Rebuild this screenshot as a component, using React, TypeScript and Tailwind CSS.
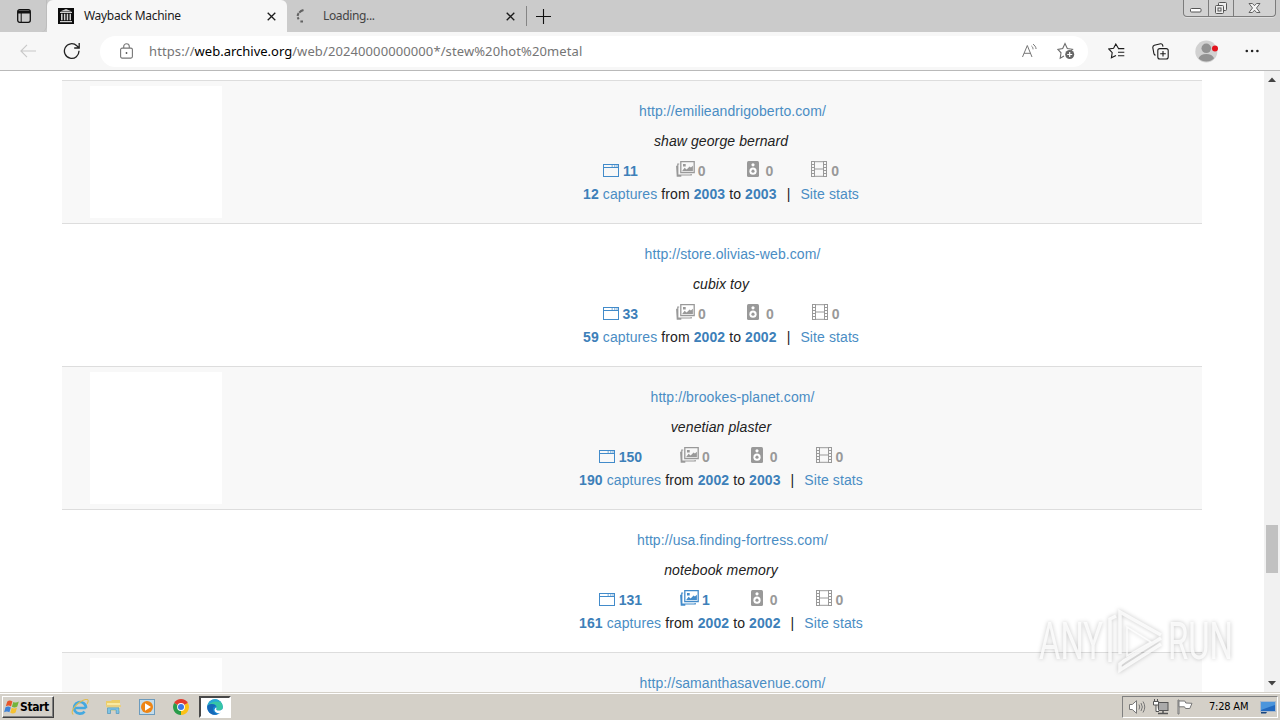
import React from "react";
import { clsx } from "clsx";

type Capture = {
  url: string;
  title: string;
  pages: string;
  images: string;
  audio: string;
  video: string;
  captures: string;
  from: string;
  to: string;
};

const results: Capture[] = [
  { url: "http://emilieandrigoberto.com/", title: "shaw george bernard", pages: "11", images: "0", audio: "0", video: "0", captures: "12", from: "2003", to: "2003" },
  { url: "http://store.olivias-web.com/", title: "cubix toy", pages: "33", images: "0", audio: "0", video: "0", captures: "59", from: "2002", to: "2002" },
  { url: "http://brookes-planet.com/", title: "venetian plaster", pages: "150", images: "0", audio: "0", video: "0", captures: "190", from: "2002", to: "2003" },
  { url: "http://usa.finding-fortress.com/", title: "notebook memory", pages: "131", images: "1", audio: "0", video: "0", captures: "161", from: "2002", to: "2002" },
];

const TabCloseIcon = () => (
  <svg width="9" height="9" viewBox="0 0 9 9" stroke="#1b1b1b" strokeWidth="1.3">
    <path d="M.7 .7l7.6 7.6M8.3 .7L.7 8.3" />
  </svg>
);

const TabBar = () => (
  <div className="flex h-8 bg-[#cbcbcb]">
    <div className="flex w-[47px] items-center justify-center rounded-br-md border-r border-[#bdbdbd] pl-[2px]">
      <svg width="14" height="14" viewBox="0 0 14 14" fill="none">
        <rect x=".7" y=".7" width="12.6" height="12.6" rx="2" stroke="#111" strokeWidth="1.3" />
        <path d="M1 1.5h12v3H1z" fill="#111" />
        <path d="M4.2 4v9" stroke="#111" strokeWidth="1" />
      </svg>
    </div>
    <div className="flex w-[240px] items-center rounded-t-md bg-[#f7f7f7] pl-[11px] pr-[11px]">
      <svg width="16" height="16" viewBox="0 0 16 16" fill="#d0d0d0">
        <path d="M0 0h16v16H0z" fill="#0c0c0c" />
        <path d="M8 1l6 2.4H2zM2 4h12v1H2zM3 5.7h1.6v6.6H3zM5.9 5.7h1.5v6.6H5.9zM8.7 5.7h1.5v6.6H8.7zM11.5 5.7H13v6.6h-1.5zM2 13h12v1.3H2z" />
      </svg>
      <span className="ml-[10px] flex-1 text-[12px] tracking-[-0.3px] text-[#1b1b1b]">Wayback Machine</span>
      <TabCloseIcon />
    </div>
    <div className="flex w-[239px] items-center pl-[9px] pr-[11px]">
      <svg width="10" height="16" viewBox="0 0 10 16" fill="none" stroke="#626262" strokeWidth="2">
        <path d="M7.5 2C4.5 2.8 2 5 1.6 8" strokeDasharray="5 .8" />
        <path d="M1.8 9.3c.2 .9 .5 1.3.9 2M4.4 13.6h2.6" />
      </svg>
      <span className="ml-[17px] flex-1 text-[12px] tracking-[-0.35px] text-[#444]">Loading...</span>
      <TabCloseIcon />
    </div>
    <div className="my-auto h-5 w-px bg-[#858585]" />
    <div className="flex flex-1 items-center pl-[9px]">
      <svg width="15" height="15" viewBox="0 0 15 15" stroke="#111" strokeWidth="1.1">
        <path d="M7.5 0v15M0 7.5h15" />
      </svg>
    </div>
    <div className="mr-[4px] flex h-[17px] w-[93px] rounded-b border border-t-0 border-[#7c7c7c] bg-[#d2d2d2] shadow-[0_1px_0_#dedede]">
      <div className="flex w-[25px] justify-center border-r border-[#7c7c7c]">
        <svg width="12" height="16" viewBox="0 0 12 16" fill="#fff" stroke="#555">
          <rect x=".5" y="8.5" width="10.5" height="3.5" rx="1" />
        </svg>
      </div>
      <div className="flex w-[25px] justify-center border-r border-[#7c7c7c]">
        <svg width="14" height="16" viewBox="0 0 14 16" fill="#eee" stroke="#555">
          <rect x="4.5" y="2.5" width="8" height="8" rx="1" />
          <rect x="1.5" y="5.5" width="8" height="8" rx="1" />
          <rect x="4" y="8" width="3" height="3" />
        </svg>
      </div>
      <div className="flex flex-1 justify-center">
        <svg width="13" height="16" viewBox="0 0 13 16" fill="#f4f4f4" stroke="#555" strokeWidth=".9">
          <path d="M1 3.5h3.4l2.1 2.2 2.1-2.2H12L8.5 8l3.5 4.5H8.6L6.5 10.2l-2.1 2.3H1L4.5 8z" />
        </svg>
      </div>
    </div>
  </div>
);

const Toolbar = () => (
  <div className="flex h-[39px] items-center border-b border-[#b9b9b9] bg-[#f7f7f7]">
    <svg className="ml-[20px]" width="16" height="14" viewBox="0 0 16 14" fill="none" stroke="#c8c8c8" strokeWidth="1.1">
      <path d="M7 .8L.9 7 7 13.2M1 7h15" />
    </svg>
    <svg className="ml-[27px]" width="18" height="18" viewBox="0 0 18 18" fill="none" stroke="#222" strokeWidth="1.3">
      <path d="M16 8.7A7.3 7.3 0 1 1 13.8 3.8L16 5.8M16.2 1v5h-5" />
    </svg>
    <div className="ml-[19px] flex h-[31px] w-[988px] items-center rounded-full bg-white pl-[20px]">
      <svg width="13" height="16" viewBox="0 0 13 16" fill="none" stroke="#767676" strokeWidth="1.1">
        <rect x=".6" y="5.1" width="11.8" height="10" rx="1.5" />
        <path d="M3.7 5V3.6a2.8 2.8 0 0 1 5.6 0V5" />
        <circle cx="6.5" cy="10" r=".9" fill="#555" stroke="none" />
      </svg>
      <span className="ml-[16px] flex-1 whitespace-nowrap pt-px text-[13px] tracking-[0.1px] text-[#757575]">
        https://<span className="tracking-[0px] text-black">web.archive.org</span>/web/20240000000000*/stew%20hot%20metal
      </span>
      <svg width="17" height="16" viewBox="0 0 17 16" fill="none" stroke="#777" strokeWidth="1">
        <path d="M1.5 14L6.3 2.5 11 14M3.1 10.3H9.5M10.5 3c1 .8 1.5 1.8 1.5 3.3M12 1.2c1.6 1 2.9 2.6 3.1 4.8" />
      </svg>
      <svg className="ml-[19px] mr-[13px]" width="18" height="18" viewBox="0 0 18 18" fill="none" stroke="#6d6d6d" strokeWidth="1.1">
        <path d="M7 14l-3.8 2.2.8-5.4L.9 7.4 5.7 6.6 8 1.6l2.3 5 5.2.7-1.6 1.6" />
        <circle cx="12.7" cy="12.5" r="4.5" fill="#666" stroke="none" />
        <path d="M12.7 10v5M10.2 12.5h5" stroke="#fff" strokeWidth="1.2" />
      </svg>
    </div>
    <svg className="ml-[20px]" width="17" height="16" viewBox="0 0 17 16" fill="none" stroke="#1c1c1c" strokeWidth="1.1">
      <path d="M10.5 5.5L7.8 1 5.6 5.2.8 6l3.4 3.6-.8 5.2L8 12.4M10 5.6h6.3M10 9.2h6.3M10 12.8h6.3" />
    </svg>
    <svg className="ml-[27px]" width="17" height="17" viewBox="0 0 17 17" fill="none" stroke="#1c1c1c" strokeWidth="1.1">
      <path d="M3.4 12.5L2 11 .8 4.6Q.7 3 2.3 2.3L8.6.8q1.5-.2 2 1.2l.4 1.6" />
      <rect x="5.8" y="5.6" width="10.4" height="10.4" rx="2" />
      <path d="M11 8v5.6M8.2 10.8h5.6" />
    </svg>
    <svg className="ml-[26px]" width="23" height="23" viewBox="0 0 23 23">
      <circle cx="11.3" cy="11.5" r="11" fill="#d1d1d1" />
      <circle cx="11.3" cy="8.3" r="4.8" fill="#929292" />
      <path d="M3.5 18.3c1.2-3 4-4.4 7.8-4.4s6.6 1.4 7.8 4.4a11 11 0 0 1-15.6 0z" fill="#929292" />
      <circle cx="20" cy="8.5" r="3" fill="#e3141e" />
    </svg>
    <svg className="ml-[27px]" width="14" height="4" viewBox="0 0 14 4" fill="#222">
      <circle cx="1.8" cy="2" r="1.3" />
      <circle cx="7.1" cy="2" r="1.3" />
      <circle cx="12.4" cy="2" r="1.3" />
    </svg>
  </div>
);

const PagesIcon = () => (
  <svg width="16" height="13" viewBox="0 0 16 13" fill="none" stroke="currentColor">
    <rect x=".5" y=".5" width="15" height="12" />
    <path d="M0 3.5h16" />
    <path d="M8.5 2h1.4M11 2h1.4M13.3 2h1.4" />
  </svg>
);

const ImagesIcon = () => (
  <svg width="19" height="16" viewBox="0 0 19 16" fill="none" stroke="currentColor">
    <path d="M4.8 .7h13.4v11H4.8z" strokeWidth="1.3" />
    <path d="M6 10.2l2.6-3.4 2 1.6 3-3 1.3 1.2 2-1.8v5.4z" fill="currentColor" stroke="none" />
    <path d="M7 3h2.7v2.5H7z" fill="currentColor" stroke="none" />
    <path d="M3.2 3H1.8v11h13.4v-1M1.8 5L.7 5.2l.6 10h4" strokeWidth="1.2" />
  </svg>
);

const AudioIcon = () => (
  <svg width="12" height="16" viewBox="0 0 12 16">
    <rect width="12" height="16" rx="1.5" fill="currentColor" />
    <circle cx="6" cy="3.8" r="1.6" fill="#fff" />
    <circle cx="6" cy="10.2" r="3.6" fill="#fff" />
    <circle cx="6" cy="10.2" r="1.6" fill="currentColor" />
  </svg>
);

const VideoIcon = () => (
  <svg width="16" height="16" viewBox="0 0 16 16" fill="none" stroke="currentColor">
    <path d="M.5 0v16M3.5 0v16M12.5 0v16M15.5 0v16M3.5 .7h9M3.5 8h9M3.5 15.3h9" />
    <path d="M2 0v16M14 0v16" strokeWidth="3" strokeDasharray="1 2" />
  </svg>
);

const Stat = ({ value, icon, className }: { value: string; icon: React.ReactNode; className: string }) => (
  <div className={clsx("flex items-end font-bold", className, value === "0" ? "text-[#999]" : "text-[#428bca]")}>
    <span className="pb-px">{icon}</span>
    <span className={clsx("h-[15px] leading-[17px]", value !== "0" && "text-[#3d80b9]")}>{value}</span>
  </div>
);

const Result = ({ item, shaded }: { item: Capture; shaded: boolean }) => (
  <div className={clsx("flex h-[143px] border-t border-[#ddd] pl-[28px] pt-[5px]", shaded && "bg-[#f8f8f8]")}>
    <div className="h-[132px] w-[132px] bg-white" />
    <div className="ml-[18px] flex flex-1 flex-col items-center pt-[15px] text-[14px] leading-5">
      <a className="ml-[23px] tracking-[0.08px] text-[#4a8dc4]">{item.url}</a>
      <p className="mt-[10px] italic tracking-[0.1px] text-[#222]">{item.title}</p>
      <div className="mt-[9px] flex h-[18px] items-end">
        <Stat value={item.pages} icon={<PagesIcon />} className="gap-[4px]" />
        <Stat value={item.images} icon={<ImagesIcon />} className="ml-[38px] gap-[3px]" />
        <Stat value={item.audio} icon={<AudioIcon />} className="ml-[41px] gap-[7px]" />
        <Stat value={item.video} icon={<VideoIcon />} className="ml-[38px] gap-[4px]" />
      </div>
      <p className="mt-[6px] whitespace-pre tracking-[0.1px] text-[#222]">
        <span className="text-[#4a8dc4]"><b className="text-[#3d80b9]">{item.captures}</b> captures</span> from{" "}
        <b className="text-[#3d80b9]">{item.from}</b> to <b className="text-[#3d80b9]">{item.to}</b>
        <span className="mx-[10px]">|</span>
        <span className="text-[#4a8dc4]">Site stats</span>
      </p>
    </div>
  </div>
);

const Scrollbar = () => (
  <div className="flex w-4 flex-col items-center justify-between bg-[#f1f1f1] pb-[6px] pt-[6px]">
    <svg width="8" height="5" viewBox="0 0 8 5" fill="#444"><path d="M0 5l4-4.5L8 5z" /></svg>
    <div className="mt-[334px] h-[48px] w-[12px] bg-[#c1c1c1]" />
    <svg width="8" height="5" viewBox="0 0 8 5" fill="#444"><path d="M0 0l4 4.5L8 0z" /></svg>
  </div>
);

const Watermark = () => (
  <svg className="absolute left-[1030px] top-[600px] drop-shadow-[0_0_2px_rgba(0,0,0,0.28)]" width="240" height="90" viewBox="0 0 240 90" fill="#fff" fillOpacity=".8">
    <text x="9" y="59" fontFamily="Roboto" fontSize="51" textLength="64" lengthAdjust="spacingAndGlyphs">ANY</text>
    <text x="138" y="59" fontFamily="Roboto" fontSize="51" textLength="65" lengthAdjust="spacingAndGlyphs">RUN</text>
    <g fill="none" stroke="#fff" strokeOpacity=".8" strokeWidth="3.5">
      <path d="M80 62V19l6-3" />
      <path d="M90 54V12l41 23M131 38L94 61l-4 3v6l41-26" />
      <path d="M97 27v29l24-14z" strokeWidth="1.5" />
    </g>
  </svg>
);

const Taskbar = () => (
  <div className="flex h-[28px] items-center border-t border-[#d4d0c8] bg-[#d4d0c8] pl-[2px] shadow-[inset_0_1px_0_#fff]">
    <div className="mt-px flex h-[22px] w-[52px] items-center border border-b-[#404040] border-l-white border-r-[#404040] border-t-white pl-px shadow-[inset_-1px_-1px_0_#808080]">
      <svg width="16" height="16" viewBox="0 0 16 16">
        <path d="M3.3 2.4C5 1 6.8 1.3 8.4 2.4L7 7.4C5.4 6.3 3.6 6.2 1.8 7.3z" fill="#e8562a" />
        <path d="M9.3 2.9c2 1.1 3.7.9 5.5-.4l-1.5 5c-1.8 1.3-3.6 1.3-5.4.2z" fill="#73b43c" />
        <path d="M1.5 8.3C3.3 7.2 5.2 7.3 6.8 8.4l-1.4 4.8c-1.6-1.1-3.5-1-5.3 0z" fill="#3f83d8" />
        <path d="M7.7 8.8c1.8 1.1 3.5.9 5.3-.3l-1.4 5c-1.8 1.2-3.6 1.3-5.3.2z" fill="#f5c131" />
      </svg>
      <span className="font-['DejaVu_Sans_Condensed','DejaVu_Sans',sans-serif] text-[12px] font-bold tracking-[-0.4px] text-black">Start</span>
    </div>
    {/* Internet Explorer */}
    <svg className="ml-[17px]" width="18" height="18" viewBox="0 0 18 18" fill="none">
      <path d="M14.8 10H4.5M15 10.2A6 5.8 0 1 0 13.6 13.6" stroke="#45a9e0" strokeWidth="2.6" />
      <path d="M2.3 16.4C-1 14.6 3.3 8 8.6 4.3c4-2.8 8.4-4 8.6-1.5.1 1-.4 2-1.2 3.1" stroke="#dfbd52" strokeWidth="1.1" />
    </svg>
    {/* Explorer */}
    <svg className="ml-[16px]" width="17" height="16" viewBox="0 0 17 16">
      <path d="M1 2h5l1-1h8v6H1z" fill="#eccd67" />
      <path d="M2 4h13v8H2z" fill="#f8e9a2" />
      <path d="M1 6h15v2H1z" fill="#ead07f" />
      <path d="M2.5 14.5V8.8h11.5v5.7h-2.8V11H5.5v3.5z" fill="#7fc3e6" stroke="#408bb6" strokeWidth=".6" />
    </svg>
    {/* Media Player */}
    <svg className="ml-[17px]" width="16" height="16" viewBox="0 0 16 16">
      <rect x=".5" y=".5" width="15" height="15" fill="#c4dceb" stroke="#6c9bbd" />
      <circle cx="8" cy="8" r="6" fill="#ee8515" />
      <path d="M6 4.2v7.6L12 8z" fill="#fff" />
    </svg>
    {/* Chrome */}
    <svg className="ml-[18px]" width="16" height="16" viewBox="0 0 16 16">
      <path d="M8 8L1.1 4A8 8 0 0 1 14.9 4z" fill="#e33b2e" />
      <path d="M8 8l6.9-4A8 8 0 0 1 8 16z" fill="#fbc116" />
      <path d="M8 8v8A8 8 0 0 1 1.1 4z" fill="#299c4a" />
      <circle cx="8" cy="8" r="3.9" fill="#fff" />
      <circle cx="8" cy="8" r="3" fill="#3b78e7" />
    </svg>
    {/* Edge */}
    <div className="ml-[10px] mt-px flex h-[22px] w-[32px] items-center justify-center border-2 border-b-white border-l-[#484848] border-r-white border-t-[#484848] bg-white">
      <svg width="16" height="16" viewBox="0 0 16 16">
        <circle cx="8" cy="8" r="7.8" fill="#1686d2" />
        <path d="M.3 7A7.8 7.8 0 0 1 15.8 8c0 2.6-2 3.5-4 3.5-2.2 0-3.1-.8-2.4-1.8C10.5 7 8 5 5.5 5 3 5 1 6 .3 7z" fill="#36c6a6" />
        <path d="M.3 7A7.8 7.8 0 0 1 8 .2c3 0 4.8 1.6 4.8 3C9 1.5 3 3 .3 7z" fill="#28a9d8" />
        <path d="M.3 7C2 4.3 7.4 4.2 9 7.2 6.6 6.8 5.3 9 6 11.2c.6 2 2.4 3.4 4.5 4.1C5 17.3-.6 13 .3 7z" fill="#1568b8" />
        <path d="M9.3 9.8c-.6 1 .6 1.8 2.6 1.8 1.8 0 3-.6 3.9-1.8V13l-1.3.6c-3 1.5-7 .3-7-2.5 0-1.4.9-2.3 1.8-2.6.3.4.3.8 0 1.3z" fill="#fff" />
      </svg>
    </div>
    <div className="ml-auto mr-[2px] mt-px flex h-[22px] w-[156px] items-center border border-b-white border-l-[#808080] border-r-white border-t-[#808080] pl-[6px]">
      <svg width="17" height="16" viewBox="0 0 17 16" fill="#fff" stroke="#777">
        <path d="M.5 5.5h2.8L7.5 1.7v12.6L3.3 10.5H.5z" />
        <path d="M10 5.5q1.5 2.5 0 5M12 4q2.7 4 0 8M14 2.5q3.5 5.5 0 11" fill="none" />
      </svg>
      <svg className="ml-[7px]" width="16" height="16" viewBox="0 0 16 16" fill="none" stroke="#555">
        <rect x="5.5" y="3.5" width="9.5" height="8" fill="#aaa" />
        <path d="M5 14.5h10M10 12v2" strokeWidth="1.5" />
        <path d="M1.5 0v3M4.5 0v3M.5 2.5h5V6h-5zM3 6v6.5h3" fill="#fff" />
      </svg>
      <svg className="ml-[8px]" width="17" height="16" viewBox="0 0 17 16" fill="#fff" stroke="#777">
        <path d="M1 15V1h1v14z" />
        <path d="M2 2h5.8l1 2 6.2.3-2.2 5.2H8.5L7.5 7.8H2z" />
      </svg>
      <span className="ml-[15px] whitespace-nowrap font-['DejaVu_Sans_Condensed','DejaVu_Sans',sans-serif] text-[11px] tracking-[-0.2px] text-black">7:28 AM</span>
      <svg className="ml-auto mr-px" width="16" height="13" viewBox="0 0 16 13">
        <rect x=".5" y=".5" width="15" height="10" fill="#2269bf" stroke="#a9b9cc" />
        <path d="M1 1h14v3L1 9z" fill="#4b95dc" />
        <path d="M1 11h6l-1 1.5H1z" fill="#17457e" />
      </svg>
    </div>
  </div>
);

export default function App() {
  return (
    <div className="relative flex h-[720px] w-[1280px] flex-col overflow-hidden bg-white font-['Noto_Sans',sans-serif]">
      <TabBar />
      <Toolbar />
      <div className="flex h-[621px] overflow-hidden">
        <main className="ml-[62px] h-[621px] w-[1140px] overflow-hidden pt-[9px] font-['Liberation_Sans',Arial,sans-serif]">
          {results.map((item, index) => (
            <Result key={item.url} item={item} shaded={index % 2 === 0} />
          ))}
          <div className="flex h-[143px] border-t border-[#ddd] bg-[#f8f8f8] pl-[28px] pt-[5px]">
            <div className="h-[132px] w-[132px] bg-white" />
            <div className="ml-[18px] flex flex-1 justify-center pt-[15px] text-[14px] leading-5">
              <a className="ml-[23px] tracking-[0.08px] text-[#4a8dc4]">http://samanthasavenue.com/</a>
            </div>
          </div>
        </main>
        <div className="ml-auto flex">
          <Scrollbar />
        </div>
      </div>
      <Taskbar />
      <Watermark />
    </div>
  );
}
